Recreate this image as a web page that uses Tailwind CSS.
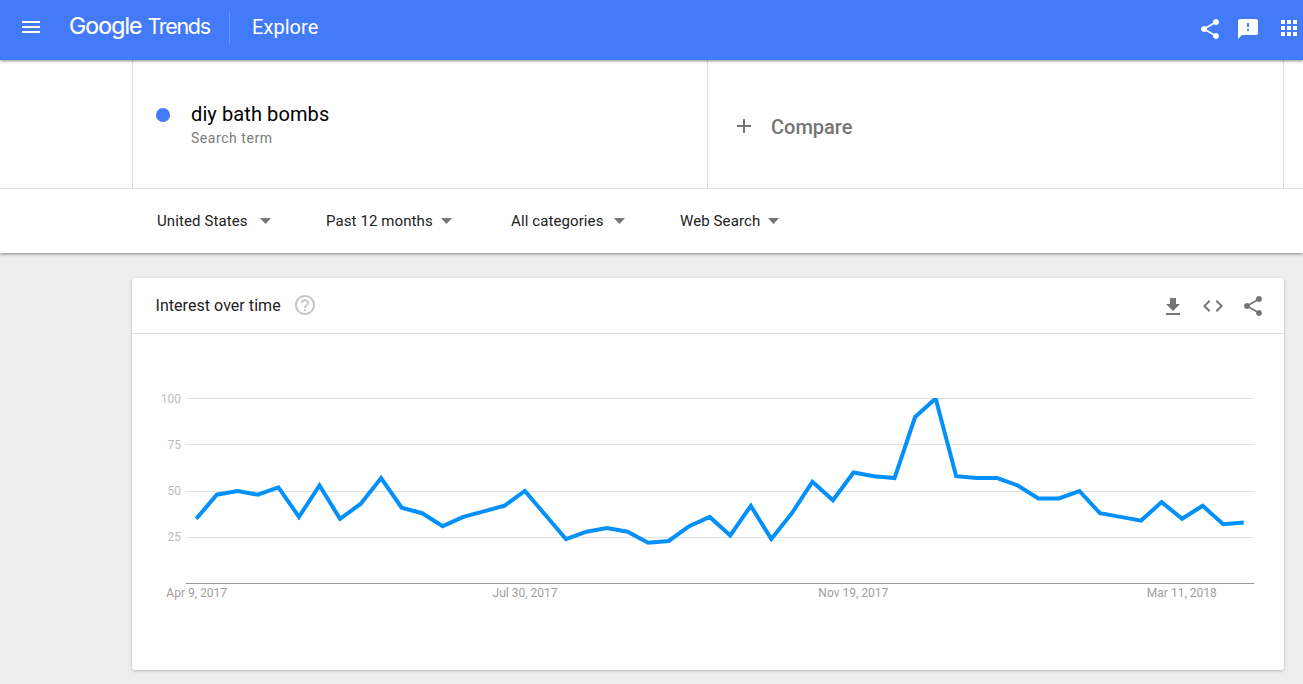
<!DOCTYPE html>
<html lang="en">
<head>
    <meta charset="UTF-8"/>
    <meta name="viewport" content="width=device-width, initial-scale=1.0"/>
    <script src="https://cdn.jsdelivr.net/npm/@tailwindcss/browser@4"></script>
    <title>diy bath bombs - Explore - Google Trends</title>
</head>
<body class="h-screen overflow-hidden bg-[#ededed] font-['Roboto',sans-serif] text-[#212121]">
<!-- Top bar -->
<header class="relative z-10 flex h-[60px] items-start bg-[#437af8] text-white shadow-[0_1px_3px_rgba(0,0,0,0.45)]">
    <button class="mt-[15px] ml-[19px] size-6 cursor-pointer" aria-label="Menu">
        <svg class="size-6" viewBox="0 0 24 24" fill="currentColor"><path d="M3 18h18v-2H3v2zm0-5h18v-2H3v2zm0-7v2h18V6H3z"/></svg>
    </button>
    <svg class="mt-2.5 ml-[26px] h-8 w-[150px] overflow-visible" viewBox="0 0 150 32" fill="currentColor">
        <text class="font-['Inter',sans-serif] text-[23px]" x="0" y="24" textLength="73.500" stroke="currentColor" stroke-width=".2">Google</text>
        <text class="font-['Inter',sans-serif] text-[21.5px]" x="78.500" y="24" textLength="63.500">Trends</text>
    </svg>
    <div class="mt-3 ml-2.5 h-[33px] w-px bg-[#6997fa]"></div>
    <h1 class="mt-[13px] ml-[22px] text-[20px] leading-7 tracking-[0.05px]">Explore</h1>
    <nav class="ml-auto flex">
        <svg class="mt-[17px] size-6" viewBox="0 0 24 24" fill="currentColor"><path d="M18 16.08c-.76 0-1.44.3-1.96.77L8.91 12.7c.05-.23.09-.46.09-.7s-.04-.47-.09-.7l7.05-4.11c.54.5 1.25.81 2.04.81 1.66 0 3-1.34 3-3s-1.34-3-3-3-3 1.34-3 3c0 .24.04.47.09.7L8.04 9.81C7.5 9.31 6.79 9 6 9c-1.66 0-3 1.34-3 3s1.34 3 3 3c.79 0 1.5-.31 2.04-.81l7.12 4.16c-.05.21-.08.43-.08.65 0 1.61 1.31 2.92 2.92 2.92s2.92-1.31 2.92-2.92-1.31-2.92-2.92-2.92z"/></svg>
        <svg class="mt-[17px] ml-3.5 size-6" viewBox="0 0 24 24" fill="currentColor"><path d="M20 2H4c-1.1 0-1.99.9-1.99 2L2 22l4-4h14c1.1 0 2-.9 2-2V4c0-1.1-.9-2-2-2zm-7 12h-2v-2h2v2zm0-4h-2V6h2v4z"/></svg>
        <svg class="mt-4 ml-[17px] mr-[2px] size-6" viewBox="0 0 24 24" fill="currentColor"><path d="M4 8h4V4H4v4zm6 12h4v-4h-4v4zm-6 0h4v-4H4v4zm0-6h4v-4H4v4zm6 0h4v-4h-4v4zm6-10v4h4V4h-4zm-6 4h4V4h-4v4zm6 6h4v-4h-4v4zm0 6h4v-4h-4v4z"/></svg>
    </nav>
</header>

<!-- Search terms and filters -->
<section class="relative h-[193px] bg-white shadow-[0_1px_3px_rgba(0,0,0,0.45)]">
    <div class="h-[129px] border-b border-[#dedede] pl-[132px]">
        <div class="flex h-full w-[1152px] border-x border-[#dedede]">
            <div class="flex w-[575px] border-r border-[#dedede] pl-[23px]">
                <span class="mt-[47.5px] size-3.5 rounded-full bg-[#437af8]"></span>
                <div class="mt-10 ml-[21px]">
                    <p class="text-[20px] leading-7 tracking-[0.1px] text-black">diy bath bombs</p>
                    <p class="text-[14px] leading-5 tracking-[0.55px] text-[#7b7b7b]">Search term</p>
                </div>
            </div>
            <button class="flex cursor-pointer items-center pl-6 pt-[5px] text-[#757575]">
                <svg class="-mt-0.5 size-6" viewBox="0 0 24 24" fill="currentColor"><path d="M19 13h-6v6h-2v-6H5v-2h6V5h2v6h6v2z"/></svg>
                <span class="ml-[15px] text-[20px] font-medium">Compare</span>
            </button>
        </div>
    </div>
    <div class="flex h-16 items-center pl-[157px] text-[15px] tracking-[0.1px]">
        <button class="flex w-[169px] cursor-pointer items-center gap-3">United States
            <svg class="h-1.5 w-[11px]" viewBox="0 0 11 6" fill="#757575"><path d="M0 0h11L5.500 6z"/></svg>
        </button>
        <button class="flex w-[185px] cursor-pointer items-center gap-2">Past 12 months
            <svg class="h-1.5 w-[11px]" viewBox="0 0 11 6" fill="#757575"><path d="M0 0h11L5.500 6z"/></svg>
        </button>
        <button class="flex w-[169px] cursor-pointer items-center gap-[11px]">All categories
            <svg class="h-1.5 w-[11px]" viewBox="0 0 11 6" fill="#757575"><path d="M0 0h11L5.500 6z"/></svg>
        </button>
        <button class="flex cursor-pointer items-center gap-2">Web Search
            <svg class="h-1.5 w-[11px]" viewBox="0 0 11 6" fill="#757575"><path d="M0 0h11L5.500 6z"/></svg>
        </button>
    </div>
</section>

<!-- Interest over time -->
<main class="mt-[25px] ml-[132px] h-[392px] w-[1152px] rounded-[2px] bg-white shadow-[0_1px_3px_rgba(0,0,0,0.22)]">
    <div class="flex h-14 items-center border-b border-[#dedede] pl-[23.5px] pr-[19px]">
        <h2 class="text-[16px] tracking-[0.05px]">Interest over time</h2>
        <svg class="-mt-px ml-3 size-6" viewBox="0 0 24 24" fill="#c6c6c6"><path d="M11 18h2v-2h-2v2zm1-16C6.480 2 2 6.480 2 12s4.480 10 10 10 10-4.480 10-10S17.520 2 12 2zm0 18c-4.410 0-8-3.590-8-8s3.590-8 8-8 8 3.590 8 8-3.590 8-8 8zm0-14c-2.210 0-4 1.790-4 4h2c0-1.100.9-2 2-2s2 .9 2 2c0 2-3 1.750-3 5h2c0-2.250 3-2.500 3-5 0-2.210-1.790-4-4-4z"/></svg>
        <div class="ml-auto flex gap-4 pt-0.5 text-[#757575]">
            <svg class="mt-px size-6" viewBox="0 0 24 24" fill="currentColor"><path d="M19 9h-4V3H9v6H5l7 7 7-7zM5 18v2h14v-2H5z"/></svg>
            <svg class="size-6" viewBox="0 0 24 24" fill="currentColor"><path d="M9.400 16.600L4.800 12l4.600-4.600L8 6l-6 6 6 6 1.400-1.400zm5.200 0l4.600-4.600-4.600-4.600L16 6l6 6-6 6-1.400-1.400z"/></svg>
            <svg class="size-6" viewBox="0 0 24 24" fill="currentColor"><path d="M18 16.080c-.76 0-1.440.3-1.960.77L8.910 12.700c.05-.23.09-.46.09-.7s-.04-.47-.09-.7l7.050-4.110c.54.5 1.250.81 2.040.81 1.660 0 3-1.340 3-3s-1.340-3-3-3-3 1.340-3 3c0 .24.04.47.09.7L8.040 9.810C7.500 9.310 6.790 9 6 9c-1.660 0-3 1.340-3 3s1.340 3 3 3c.79 0 1.500-.31 2.040-.81l7.120 4.160c-.05.21-.08.43-.08.65 0 1.610 1.310 2.920 2.920 2.920s2.920-1.310 2.920-2.920-1.310-2.920-2.920-2.920z"/></svg>
        </div>
    </div>
    <svg id="chart" class="h-[336px] w-[1152px] text-[12px]" viewBox="0 0 1152 336">
        <defs>
            <clipPath id="plot"><rect x="54" y="64" width="1068" height="186"/></clipPath>
        </defs>
        <g stroke="#dedede">
            <path d="M54 64.500H1122M54 110.500H1122M54 157.500H1122M54 203.500H1122"/>
            <path d="M54 249.500H1122" stroke="#999"/>
        </g>
        <g fill="#bdbdbd" text-anchor="end">
            <text x="49" y="69">100</text>
            <text x="49" y="115">75</text>
            <text x="49" y="161">50</text>
            <text x="49" y="207">25</text>
        </g>
        <g fill="#9e9e9e" text-anchor="middle">
            <text x="64.700" y="263">Apr 9, 2017</text>
            <text x="393" y="263">Jul 30, 2017</text>
            <text x="721.300" y="263">Nov 19, 2017</text>
            <text x="1049.800" y="263">Mar 11, 2018</text>
        </g>
        <polyline id="series" clip-path="url(#plot)" fill="none" stroke="#0490fb" stroke-width="4"/>
    </svg>
</main>
<script>
    // weekly values, Apr 2017 - Apr 2018
    const values = [
        35, 48, 50, 48, 52, 36, 53, 35, 43, 57, 41, 38, 31,
        36, 39, 42, 50, 37, 24, 28, 30, 28, 22, 23, 31, 36,
        26, 42, 24, 38, 55, 45, 60, 58, 57, 90, 100, 58, 57,
        57, 53, 46, 46, 50, 38, 36, 34, 44, 35, 42, 32, 33,
    ];
    const step = 1068 / values.length;
    const points = values.map((v, i) => `${54 + step * (i + 0.5)},${249.5 - v * 1.85}`);
    document.getElementById('series').setAttribute('points', points.join(' '));
</script>
</body>
</html>
